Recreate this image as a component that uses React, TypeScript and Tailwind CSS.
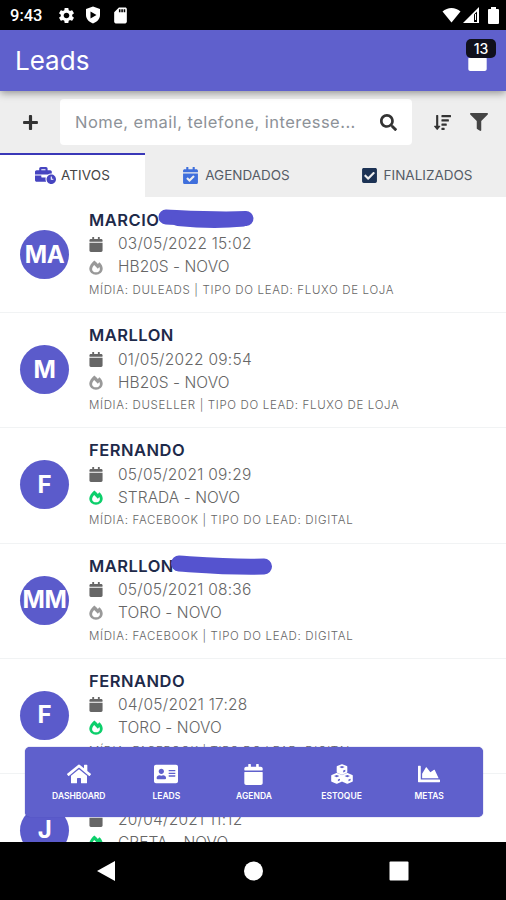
import {
  FaAddressCard,
  FaBusinessTime,
  FaCalendar,
  FaCalendarCheck,
  FaChartArea,
  FaCheckSquare,
  FaFilter,
  FaHome,
  FaPlus,
  FaSearch,
  FaSortAmountDown,
} from 'react-icons/fa';
import { MdSdCard, MdSettings } from 'react-icons/md';
import type { ReactNode } from 'react';

interface Lead {
  initials: string;
  name: string;
  date: string;
  interest: string;
  media: string;
  hot?: boolean;
  // hand drawn stroke hiding the surname
  stroke?: ReactNode;
}

const leads: Lead[] = [
  {
    initials: 'MA',
    name: 'MARCIO',
    date: '03/05/2022 15:02',
    interest: 'HB20S - NOVO',
    media: 'MÍDIA: DULEADS | TIPO DO LEAD: FLUXO DE LOJA',
    stroke: (
      <svg className="absolute left-[69px] top-0" width="99" height="24" viewBox="0 0 99 24" fill="none">
        <path d="M8 8 C30 9 60 11 88 9.500" stroke="#5553cf" strokeWidth="15" strokeLinecap="round" />
        <path d="M20 10 C40 12 66 12.500 85 10.500" stroke="#5553cf" strokeWidth="14" strokeLinecap="round" />
      </svg>
    ),
  },
  {
    initials: 'M',
    name: 'MARLLON',
    date: '01/05/2022 09:54',
    interest: 'HB20S - NOVO',
    media: 'MÍDIA: DUSELLER | TIPO DO LEAD: FLUXO DE LOJA',
  },
  {
    initials: 'F',
    name: 'FERNANDO',
    date: '05/05/2021 09:29',
    interest: 'STRADA - NOVO',
    media: 'MÍDIA: FACEBOOK | TIPO DO LEAD: DIGITAL',
    hot: true,
  },
  {
    initials: 'MM',
    name: 'MARLLON',
    date: '05/05/2021 08:36',
    interest: 'TORO - NOVO',
    media: 'MÍDIA: FACEBOOK | TIPO DO LEAD: DIGITAL',
    stroke: (
      <svg className="absolute left-[81px] top-0" width="104" height="24" viewBox="0 0 104 24" fill="none">
        <path d="M9 8.500 C32 10 60 12.500 94 11.500" stroke="#5553cf" strokeWidth="16" strokeLinecap="round" />
      </svg>
    ),
  },
  {
    initials: 'F',
    name: 'FERNANDO',
    date: '04/05/2021 17:28',
    interest: 'TORO - NOVO',
    media: 'MÍDIA: FACEBOOK | TIPO DO LEAD: DIGITAL',
    hot: true,
  },
  {
    initials: 'J',
    name: 'JOÃO',
    date: '20/04/2021 11:12',
    interest: 'CRETA - NOVO',
    media: 'MÍDIA: FACEBOOK | TIPO DO LEAD: DIGITAL',
    hot: true,
  },
];

// three stacked boxes, each with an open lid and a lit side
const CubesIcon = () => (
  <svg width="22" height="20" viewBox="0 0 22 20">
    <path
      fill="#fff"
      stroke="#fff"
      strokeWidth="1.600"
      strokeLinejoin="round"
      d="M11 1 15.500 2.800V8L11 10 6.500 8V2.800Z M5.700 9.800 10.300 11.700V17L5.700 19 1 17V11.700Z M16.300 9.800 21 11.700V17L16.300 19 11.700 17V11.700Z"
    />
    <path
      fill="#5f60cc"
      d="M11 2 13.700 3.100 11 4.200 8.300 3.100Z M12.200 6.600 14.300 5.700V7.400L12.200 8.400Z M5.700 11 8.400 12.100 5.700 13.200 3 12.100Z M6.900 15.600 9 14.700V16.300L6.900 17.300Z M16.300 11 19 12.100 16.300 13.200 13.600 12.100Z M17.500 15.600 19.600 14.700V16.300L17.500 17.300Z"
    />
  </svg>
);

const FlameIcon = ({ className }: { className: string }) => (
  <svg className={className} width="14" height="15" viewBox="0 0 14 15">
    <path
      fill="currentColor"
      fillRule="evenodd"
      d="M5.300.4C6.800 1.500 8 2.700 8.900 4 9.400 3.300 9.900 2.700 10.500 2.200 12.500 4 13.700 6.600 13.700 8.600 13.700 12.200 10.800 14.700 7 14.700S.3 12.200.3 8.600C.3 6 2.400 2.800 5.300.4ZM5.200 5C4 6.300 3.100 7.900 3.100 9.200 3.100 11.100 4.800 12.300 7 12.300S10.900 11.100 10.900 9.200C10.900 8.300 10.700 7.600 10.300 6.900L8.800 8.700C7.800 7.600 6.600 6.200 5.200 5Z"
    />
  </svg>
);

const menu = [
  { label: 'DASHBOARD', icon: <FaHome size={24} /> },
  { label: 'LEADS', icon: <FaAddressCard size={24} /> },
  { label: 'AGENDA', icon: <FaCalendar size={21} /> },
  { label: 'ESTOQUE', icon: <CubesIcon /> },
  { label: 'METAS', icon: <FaChartArea size={22} /> },
];

const StatusBar = () => (
  <div className="flex h-[30px] shrink-0 items-center bg-black pl-[10px] pr-[7px] text-white">
    <span className="mt-[2px] w-[47px] font-[Roboto] text-[16.5px] font-medium leading-none">9:43</span>
    <MdSettings size={19} />
    <svg className="ml-[9px]" width="16" height="18" viewBox="0 0 16 18">
      <path
        fill="#fff"
        fillRule="evenodd"
        d="M8 .5 15 3v6c0 4-3 7-7 8.500C4 16 1 13 1 9V3Z M5.500 5.500v7L11.500 9Z"
      />
    </svg>
    <MdSdCard className="ml-[10px]" size={19} />
    <div className="ml-auto flex items-center gap-[2px]">
      <svg width="19" height="16" viewBox="0 0 19 16">
        <path fill="#fff" d="M.5 4.500C5.500-.3 13.500-.3 18.500 4.500L9.500 15.500Z" />
      </svg>
      <svg width="16" height="16" viewBox="0 0 16 16">
        <path fill="#fff" fillRule="evenodd" d="M0 16 16 0V16Z M11 7.500V15H14V4.500Z" />
        <path fill="#fff" d="M12 7h1v6h-1z" />
      </svg>
      <svg className="ml-[7px]" width="11" height="17" viewBox="0 0 11 17">
        <path fill="#fff" d="M3 0h5v2h2a1 1 0 0 1 1 1v13a1 1 0 0 1-1 1H1a1 1 0 0 1-1-1V3a1 1 0 0 1 1-1h2Z" />
      </svg>
    </div>
  </div>
);

const LeadRow = ({ lead }: { lead: Lead }) => (
  <div className="flex h-[115.2px] shrink-0 border-b border-[#f1f3f4] pl-5">
    <div className="mt-[32px] flex size-[49px] shrink-0 items-center justify-center rounded-full bg-[#5b5bcb] text-[24px] font-bold tracking-[-0.3px] text-white">
      {lead.initials}
    </div>
    <div className="ml-5 mt-[11px] whitespace-nowrap">
      <div className="relative h-[23px] text-[16.5px] font-semibold leading-[22px] tracking-[0.5px] text-[#1e2a4a]">
        {lead.name}
        {lead.stroke}
      </div>
      <div className="flex h-[24px] items-center text-[15.5px] font-light tracking-[0.25px] text-[#666]">
        <FaCalendar className="mr-[15px] w-[14px] text-[#666]" size={15} />
        {lead.date}
      </div>
      <div className="flex h-[22px] items-center text-[15.5px] font-light tracking-[0.05px] text-[#666]">
        <FlameIcon className={lead.hot ? 'mr-[15px] text-[#0ccf6b]' : 'mr-[15px] text-[#999]'} />
        {lead.interest}
      </div>
      <div className="h-[24px] text-[11.5px] font-light leading-[25px] tracking-[0.66px] text-[#666]">{lead.media}</div>
    </div>
  </div>
);

export default function App() {
  return (
    <div className="relative flex h-[900px] w-[506px] flex-col overflow-hidden bg-white font-[Inter,sans-serif]">
      <StatusBar />

      <header className="relative z-10 flex h-[61px] shrink-0 items-center bg-[#5f60cc] pl-[15px] pr-[18px] text-white shadow-[0_2px_8px_rgba(0,0,0,0.4)]">
        <h1 className="text-[26px] leading-none">Leads</h1>
        <div className="relative ml-auto">
          <FaCalendar size={21} />
          <span className="absolute -right-[8px] -top-[11px] flex h-[19px] w-[30px] items-center justify-center rounded-[5px] bg-[#10101c] text-[14px] font-medium">
            13
          </span>
        </div>
      </header>

      <div className="flex h-[62px] shrink-0 items-center bg-[#eee] text-[#333]">
        <div className="flex w-[60px] justify-center">
          <FaPlus size={17} />
        </div>
        <div className="flex h-[46px] w-[352px] items-center justify-between rounded-[4px] bg-white pl-[15px] pr-[15px]">
          <span className="mt-px text-[16.5px] tracking-[0.46px] text-[#8d9298]">Nome, email, telefone, interesse...</span>
          <FaSearch size={17} />
        </div>
        <FaSortAmountDown className="ml-[22px]" size={17} />
        <FaFilter className="ml-[19px] text-[#444]" size={18} />
      </div>

      <nav className="flex h-[44px] shrink-0 bg-[#eee] text-[13.5px] text-[#555c66]">
        <div className="flex w-[145px] items-center justify-center gap-[5px] border-t-2 border-[#3a38b8] bg-white pb-[2px] text-[#444]">
          <FaBusinessTime className="text-[#4644c0]" size={21} />
          <span className="tracking-[0.1px]">ATIVOS</span>
        </div>
        <div className="flex w-[182px] items-center justify-center gap-[6px]">
          <FaCalendarCheck className="text-[#3f6fdc]" size={17} />
          <span>AGENDADOS</span>
        </div>
        <div className="flex w-[179px] items-center justify-center gap-[6px]">
          <FaCheckSquare className="text-[#1c3254]" size={17} />
          <span>FINALIZADOS</span>
        </div>
      </nav>

      <main className="flex min-h-0 flex-1 flex-col overflow-hidden pt-px">
        {leads.map((lead, index) => (
          <LeadRow key={index} lead={lead} />
        ))}
      </main>

      {/* floating menu, stays over the list */}
      <nav className="absolute bottom-[83px] left-[25px] flex h-[70px] w-[458px] rounded-[5px] bg-[#5f60cc] px-[10px] text-white shadow-[0_0_1px_#3c3cb0]">
        {menu.map((item) => (
          <div key={item.label} className="flex flex-1 flex-col items-center pt-[15px]">
            <div className="flex h-[24px] items-center">{item.icon}</div>
            <span className="mt-[5px] text-[8.5px] font-semibold leading-[11px]">{item.label}</span>
          </div>
        ))}
      </nav>

      <footer className="flex h-[58px] shrink-0 items-center bg-black pl-[96px]">
        <svg width="314" height="22" viewBox="0 0 314 22" fill="#fff">
          <path d="M1 11 19 1V21Z" />
          <circle cx="157.500" cy="11" r="9.500" />
          <rect x="293.500" y="1.500" width="19" height="19" rx="1" />
        </svg>
      </footer>
    </div>
  );
}
